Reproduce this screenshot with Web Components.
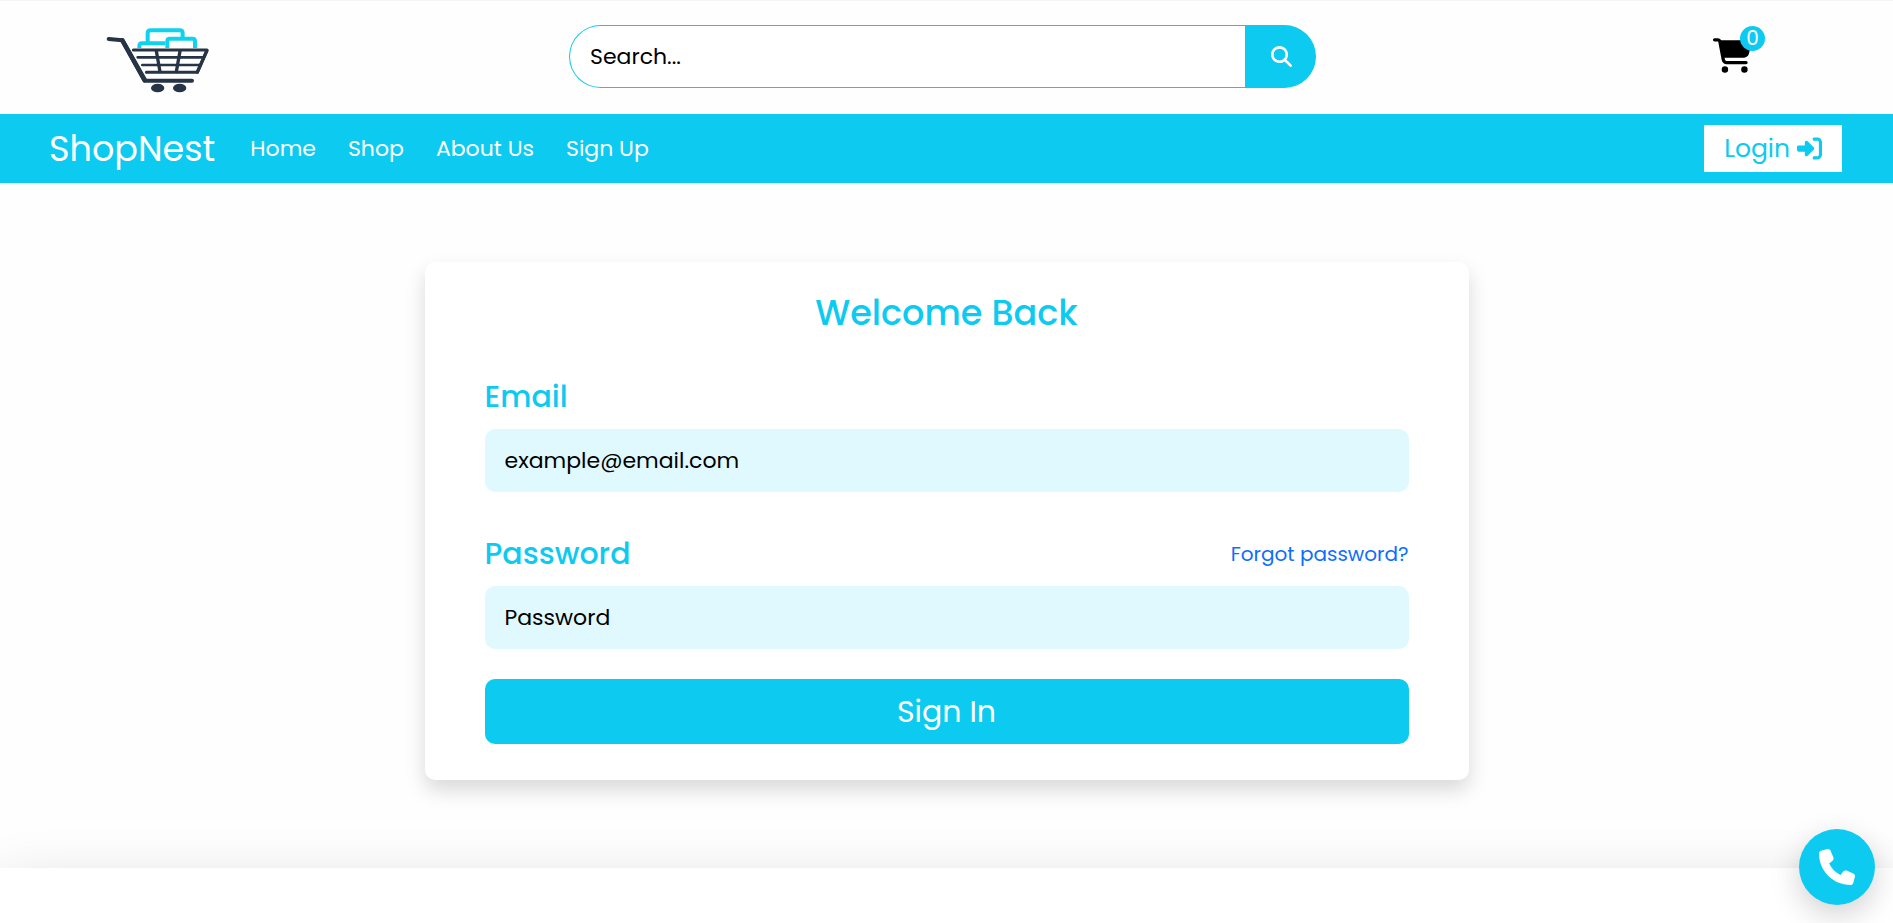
<!DOCTYPE html>
<html lang="en">
<head>
<meta charset="utf-8">
<meta name="viewport" content="width=device-width, initial-scale=1">
<title>ShopNest</title>
<style>
body {
  --info: #0dcaf0;
  --link: #0d6efd;
  --field: #e0f9ff;
  margin: 0;
  min-height: 100vh;
  display: flex;
  flex-direction: column;
  background: #fefefe;
  color: #000;
  font-family: Poppins, Inter, "Open Sans", sans-serif;
}

main {
  padding: 79px 24px 88px;
}

site-footer {
  flex: 1;
}
</style>
</head>
<body>
<site-header></site-header>
<nav-bar>
  <nav-link href="#home">Home</nav-link>
  <nav-link href="#shop">Shop</nav-link>
  <nav-link href="#about">About Us</nav-link>
  <nav-link href="#signup">Sign Up</nav-link>
</nav-bar>
<main>
  <login-card heading="Welcome Back">
    <form-field label="Email" type="email" placeholder="example@email.com"></form-field>
    <form-field label="Password" type="password" placeholder="Password">
      <forgot-link slot="aside"></forgot-link>
    </form-field>
  </login-card>
</main>
<site-footer></site-footer>
<call-button></call-button>

<script>
const ICONS = {
  search: ['0 0 512 512', 'M416 208c0 45.9-14.9 88.3-40 122.7L502.6 457.4c12.5 12.5 12.5 32.8 0 45.3s-32.8 12.5-45.3 0L330.7 376c-34.4 25.2-76.8 40-122.7 40C93.1 416 0 322.9 0 208S93.1 0 208 0S416 93.1 416 208zM208 352a144 144 0 1 0 0-288 144 144 0 1 0 0 288z'],
  cart: ['0 0 576 512', 'M0 24C0 10.7 10.7 0 24 0H69.5c22 0 41.5 12.8 50.6 32h411c26.3 0 45.5 25 38.6 50.4l-41 152.3c-8.5 31.4-37 53.3-69.5 53.3H170.7l5.4 28.5c2.2 11.3 12.1 19.5 23.6 19.5H488c13.3 0 24 10.7 24 24s-10.7 24-24 24H199.7c-34.6 0-64.3-24.6-70.7-58.5L77.4 54.5c-.7-3.8-4-6.5-7.9-6.5H24C10.7 48 0 37.3 0 24zM128 464a48 48 0 1 1 96 0 48 48 0 1 1-96 0zm336-48a48 48 0 1 1 0 96 48 48 0 1 1 0-96z'],
  login: ['0 0 512 512', 'M217.9 105.9L340.7 228.7c7.2 7.2 11.3 17.1 11.3 27.3s-4.1 20.1-11.3 27.3L217.9 406.1c-6.4 6.4-15 9.9-24 9.9c-18.7 0-33.9-15.2-33.9-33.9l0-62.1L32 320c-17.7 0-32-14.3-32-32l0-64c0-17.7 14.3-32 32-32l128 0 0-62.1c0-18.7 15.2-33.9 33.9-33.9c9 0 17.6 3.6 24 9.9zM352 416l64 0c17.7 0 32-14.3 32-32l0-256c0-17.7-14.3-32-32-32l-64 0c-17.7 0-32-14.3-32-32s14.3-32 32-32l64 0c53 0 96 43 96 96l0 256c0 53-43 96-96 96l-64 0c-17.7 0-32-14.3-32-32s14.3-32 32-32z'],
  phone: ['0 0 512 512', 'M164.9 24.6c-7.7-18.6-28-28.5-47.4-23.2l-88 24C12.1 30.2 0 46 0 64C0 311.4 200.6 512 448 512c18 0 33.8-12.1 38.6-29.5l24-88c5.3-19.4-4.6-39.7-23.2-47.4l-96-40c-16.3-6.8-35.2-2.1-46.3 11.6L304.7 368C234.3 334.7 177.3 277.7 144 207.3L193.3 167c13.7-11.2 18.4-30 11.6-46.3l-40-96z'],
};

const icon = (name) => `
<svg viewBox="${ICONS[name][0]}" fill="currentColor" aria-hidden="true"><path d="${ICONS[name][1]}"/></svg>`;

// Registers an element whose shadow root is cloned from the given markup.
function define(name, html, setup) {
  const template = document.createElement('template');
  template.innerHTML = html;

  customElements.define(name, class extends HTMLElement {
    constructor() {
      super();
      this.attachShadow({mode: 'open'}).appendChild(
          template.content.cloneNode(true));
    }

    connectedCallback() {
      if (setup) {
        setup(this, this.shadowRoot);
      }
    }
  });
}

define('shop-logo', `
<style>
:host { display: block; }
svg { display: block; width: 104px; height: 80px; }
</style>
<svg viewBox="48 5 312 240" fill="none" stroke-linecap="round" stroke-linejoin="round" role="img" aria-label="ShopNest logo">
  <g stroke="#0fd3ee" stroke-width="12" stroke-linecap="butt">
    <path d="M173 84V54q0-9 9-9h87q9 0 9 9v16"/>
    <path d="M148 98v-5q0-9 8-9h70"/>
    <path d="M232 98V77q0-7 8-7h67q8 0 8 7v21"/>
  </g>
  <g stroke="#263445">
    <path d="M56 71l41 4 67 121h142" stroke-width="12"/>
    <path d="M97 75l67 119" stroke-width="14"/>
    <path d="M130 104h221l-29 67H169" stroke-width="9"/>
    <path d="M351 106l-29 64" stroke-width="10"/>
    <path d="M143 126h197M157 149h174" stroke-width="8"/>
    <path d="M199 107l11 62M270 107l-11 62" stroke-width="10"/>
  </g>
  <g fill="#263445">
    <ellipse cx="203" cy="218" rx="20" ry="13"/>
    <ellipse cx="269" cy="218" rx="20" ry="13"/>
  </g>
</svg>
`);

define('search-box', `
<style>
:host { display: block; }
form {
  display: flex;
  height: 63px;
}
input {
  flex: 1;
  min-width: 0;
  box-sizing: border-box;
  padding: 0 20px;
  border: 1px solid var(--info);
  border-right: 0;
  border-radius: 32px 0 0 32px;
  background: #fff;
  color: inherit;
  font-family: inherit;
  font-size: 22px;
}
input::placeholder { color: #000; opacity: 1; }
button {
  width: 71px;
  display: flex;
  align-items: center;
  padding: 0 0 0 26px;
  border: 0;
  border-radius: 0 32px 32px 0;
  background: var(--info);
  color: #fff;
}
svg { width: 21px; height: 21px; }
</style>
<form role="search">
  <input type="search" placeholder="Search..." aria-label="Search">
  <button type="button" aria-label="Search">${icon('search')}</button>
</form>
`);

define('cart-link', `
<style>
:host { display: block; padding-bottom: 4px; }
a {
  position: relative;
  display: block;
  color: #000;
}
svg { display: block; width: 39px; height: 35px; }
span {
  position: absolute;
  top: -12px;
  right: -13px;
  width: 25px;
  border-radius: 50%;
  background: var(--info);
  color: #fff;
  font-size: 20px;
  line-height: 25px;
  text-align: center;
}
</style>
<a href="#cart" aria-label="Cart">${icon('cart')}<span>0</span></a>
`);

define('site-header', `
<style>
:host {
  display: grid;
  grid-template-columns: 1fr minmax(0, 747px) 1fr;
  align-items: center;
  padding: 16px 114px 17px 106px;
  border-top: 1px solid #f4f4f4;
}
search-box { margin-bottom: 2px; }
cart-link { justify-self: end; margin-right: 27px; }
</style>
<shop-logo></shop-logo>
<search-box></search-box>
<cart-link></cart-link>
`);

define('nav-link', `
<style>
:host { display: block; }
a {
  color: #fff;
  font-size: 22px;
  line-height: 32px;
  text-decoration: none;
}
</style>
<a><slot></slot></a>
`, (host, root) => {
  root.querySelector('a').href = host.getAttribute('href');
});

define('nav-bar', `
<style>
:host {
  display: block;
  background: var(--info);
}
nav {
  display: flex;
  align-items: center;
  min-height: 69px;
  padding: 0 51px 0 49px;
}
a { text-decoration: none; }
.brand {
  margin-right: 35px;
  color: #fff;
  font-size: 35px;
  line-height: 48px;
}
.links {
  display: flex;
  gap: 32px;
  margin-right: auto;
}
.login {
  display: flex;
  align-items: center;
  gap: 7px;
  height: 47px;
  padding: 0 20px;
  background: #fff;
  color: var(--info);
  font-size: 25px;
}
svg { width: 25px; height: 25px; }
</style>
<nav>
  <a class="brand" href="#home">ShopNest</a>
  <div class="links"><slot></slot></div>
  <a class="login" href="#login">Login ${icon('login')}</a>
</nav>
`);

define('forgot-link', `
<style>
:host { display: block; }
a {
  color: var(--link);
  font-size: 20px;
  line-height: 32px;
  text-decoration: none;
}
</style>
<a href="#forgot">Forgot password?</a>
`);

define('form-field', `
<style>
:host { display: block; }
.row {
  display: flex;
  align-items: center;
  justify-content: space-between;
  margin-bottom: 8px;
}
label {
  color: var(--info);
  font-size: 30px;
  font-weight: 500;
  line-height: 48px;
}
input {
  display: block;
  width: 100%;
  height: 63px;
  box-sizing: border-box;
  padding: 0 20px;
  border: 0;
  border-radius: 10px;
  background: var(--field);
  color: inherit;
  font-family: inherit;
  font-size: 22px;
}
input::placeholder { color: #000; opacity: 1; }
</style>
<div class="row">
  <label for="control"></label>
  <slot name="aside"></slot>
</div>
<input id="control">
`, (host, root) => {
  const input = root.querySelector('input');
  root.querySelector('label').textContent = host.getAttribute('label');
  input.type = host.getAttribute('type');
  input.placeholder = host.getAttribute('placeholder');
});

define('login-card', `
<style>
:host {
  display: block;
  box-sizing: border-box;
  max-width: 1044px;
  margin: 0 auto;
  padding: 25px 60px 36px;
  border-radius: 10px;
  background: #fff;
  box-shadow: 0 10px 20px rgba(0, 0, 0, .15);
}
h1 {
  margin: 0 0 34px;
  color: var(--info);
  font-size: 35px;
  font-weight: 500;
  line-height: 52px;
  text-align: center;
}
form {
  display: flex;
  flex-direction: column;
  gap: 30px;
}
.fields {
  display: flex;
  flex-direction: column;
  gap: 38px;
}
button {
  height: 65px;
  border: 0;
  border-radius: 10px;
  background: var(--info);
  color: #fff;
  font-family: inherit;
  font-size: 30px;
}
</style>
<h1></h1>
<form>
  <div class="fields"><slot></slot></div>
  <button type="button">Sign In</button>
</form>
`, (host, root) => {
  root.querySelector('h1').textContent = host.getAttribute('heading');
});

define('site-footer', `
<style>
:host {
  display: block;
  min-height: 48px;
  background: #fff;
  box-shadow: 0 20px 60px rgba(0, 0, 0, .175);
}
</style>
<slot></slot>
`);

define('call-button', `
<style>
:host {
  position: fixed;
  right: 18px;
  bottom: 18px;
}
a {
  display: grid;
  place-items: center;
  width: 76px;
  height: 76px;
  border-radius: 50%;
  background: var(--info);
  color: #fff;
  box-shadow: 0 10px 30px rgba(0, 0, 0, .18);
}
svg { width: 36px; height: 36px; }
</style>
<a href="#call" aria-label="Call us">${icon('phone')}</a>
`);
</script>
</body>
</html>
